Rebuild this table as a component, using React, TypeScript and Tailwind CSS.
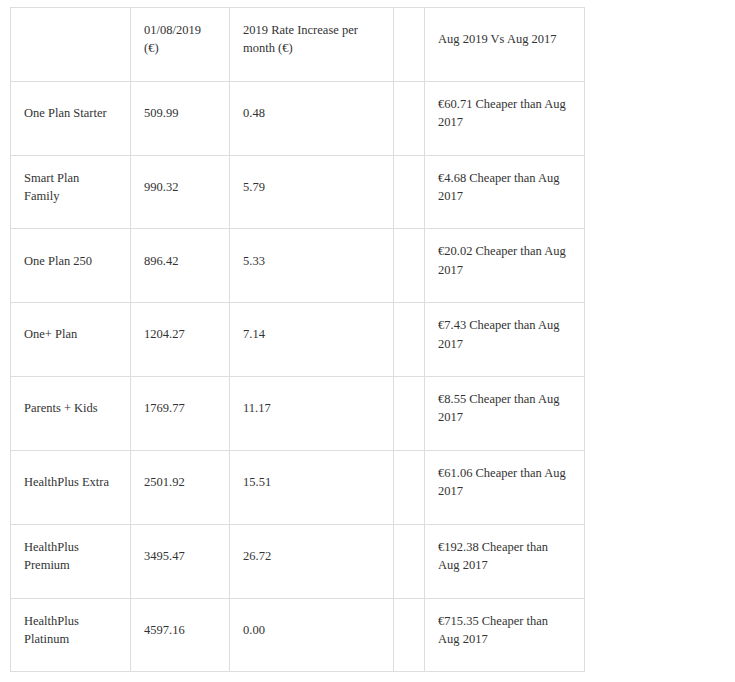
const rows = [
  ['One Plan Starter', '509.99', '0.48', '€60.71 Cheaper than Aug 2017'],
  ['Smart Plan Family', '990.32', '5.79', '€4.68 Cheaper than Aug 2017'],
  ['One Plan 250', '896.42', '5.33', '€20.02 Cheaper than Aug 2017'],
  ['One+ Plan', '1204.27', '7.14', '€7.43 Cheaper than Aug 2017'],
  ['Parents + Kids', '1769.77', '11.17', '€8.55 Cheaper than Aug 2017'],
  ['HealthPlus Extra', '2501.92', '15.51', '€61.06 Cheaper than Aug 2017'],
  ['HealthPlus Premium', '3495.47', '26.72', '€192.38 Cheaper than Aug 2017'],
  ['HealthPlus Platinum', '4597.16', '0.00', '€715.35 Cheaper than Aug 2017'],
];

const cell = 'border border-[#dddddd] pl-[13px] pr-[17px] pt-[13px] pb-[23px] align-middle text-left font-normal';

export default function App() {
  return (
    <div className="min-h-screen bg-white pt-[7px] pl-[10px] text-[12.5px] leading-[18.4px] text-[#333333] font-['Liberation_Serif','Times_New_Roman',serif]">
      <table className="table-fixed border-collapse w-[574px]">
        <colgroup>
          <col className="w-[120px]" />
          <col className="w-[99px]" />
          <col className="w-[164px]" />
          <col className="w-[31px]" />
          <col className="w-[160px]" />
        </colgroup>
        <thead>
          <tr>
            <th className={cell}></th>
            <th className={cell}>01/08/2019 (€)</th>
            <th className={cell}>2019 Rate Increase per month (€)</th>
            <th className={cell}></th>
            <th className={cell}>Aug 2019 Vs Aug 2017</th>
          </tr>
        </thead>
        <tbody>
          {rows.map((r) => (
            <tr key={r[0]}>
              <td className={cell}>{r[0]}</td>
              <td className={cell}>{r[1]}</td>
              <td className={cell}>{r[2]}</td>
              <td className={cell}></td>
              <td className={cell}>{r[3]}</td>
            </tr>
          ))}
        </tbody>
      </table>
    </div>
  );
}
